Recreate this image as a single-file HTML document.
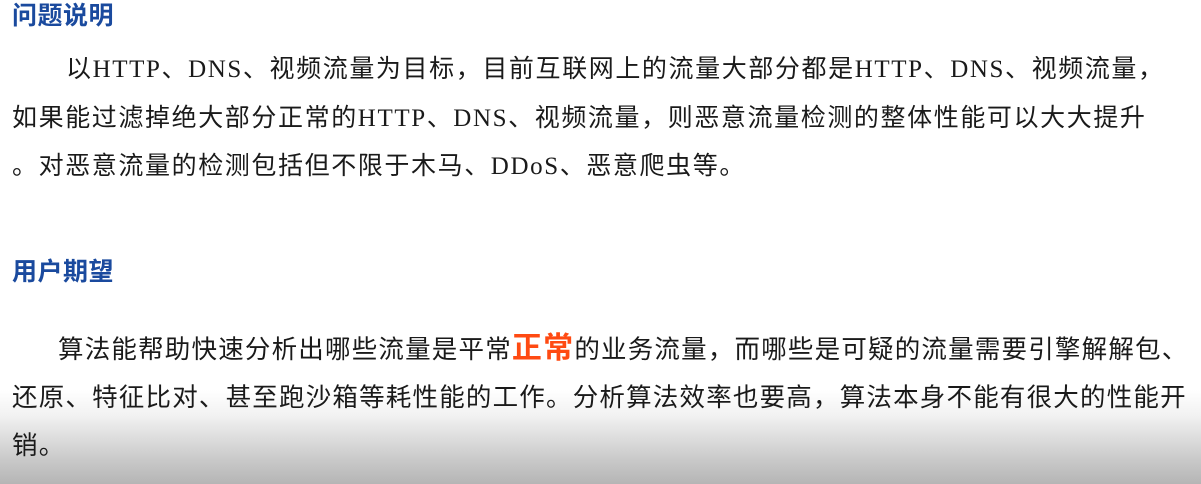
<!DOCTYPE html>
<html><head><meta charset="utf-8"><style>
body{margin:0;width:1201px;height:484px;overflow:hidden;background:linear-gradient(#fff 0,#fff 390px,#f2f2f2 415px,#c9c9c9 460px,#b5b5b5 484px);position:relative;font-family:"Liberation Serif","Noto Sans CJK SC",serif;color:#1a1a1a}
.h{position:absolute;left:12px;font-family:"Liberation Sans","Noto Sans CJK SC",sans-serif;font-weight:bold;color:#1a4a9e;font-size:25px;line-height:30px;letter-spacing:0.5px}
.l{position:absolute;white-space:nowrap;font-size:25px;line-height:34px;letter-spacing:1.6px}
.s{font-family:"Liberation Sans","Noto Sans CJK SC",sans-serif;letter-spacing:1.2px;font-size:25.5px}
.r{color:#ff4a12;font-weight:bold;font-size:30px}
</style></head><body>
<div class="h" style="top:1px">问题说明</div>
<div class="l" style="left:66px;top:53px">以HTTP、DNS、视频流量为目标，目前互联网上的流量大部分都是HTTP、DNS、视频流量，</div>
<div class="l" style="left:12px;top:102px">如果能过滤掉绝大部分正常的HTTP、DNS、视频流量，则恶意流量检测的整体性能可以大大提升</div>
<div class="l" style="left:12px;top:150px">。对恶意流量的检测包括但不限于木马、DDoS、恶意爬虫等。</div>
<div class="h" style="top:257px">用户期望</div>
<div class="l s" style="left:58px;top:332px">算法能帮助快速分析出哪些流量是平常<span class="r">正常</span>的业务流量，而哪些是可疑的流量需要引擎解解包、</div>
<div class="l s" style="left:12px;top:381px">还原、特征比对、甚至跑沙箱等耗性能的工作。分析算法效率也要高，算法本身不能有很大的性能开</div>
<div class="l s" style="left:12px;top:429px">销。</div>
</body></html>
